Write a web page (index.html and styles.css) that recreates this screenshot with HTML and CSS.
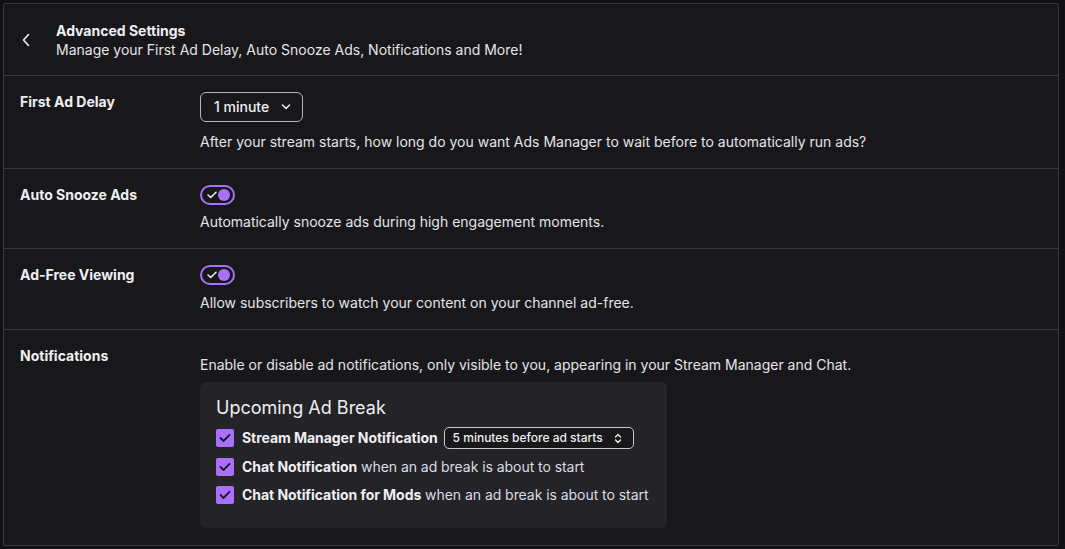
FILE: index.html
```html
<!DOCTYPE html>
<html lang="en">
<head>
<meta charset="utf-8">
<title>Advanced Settings</title>
<link rel="stylesheet" href="styles.css">
</head>
<body>
<div class="panel">
  <header class="head">
    <button class="back" aria-label="Back">
      <svg width="10" height="14" viewBox="0 0 10 14"><path d="M7.5 1.5 L2.5 7 L7.5 12.5" fill="none" stroke="#efeff1" stroke-width="1.6" stroke-linecap="round" stroke-linejoin="round"/></svg>
    </button>
    <div class="head-text">
      <div class="title">Advanced Settings</div>
      <div class="subtitle">Manage your First Ad Delay, Auto Snooze Ads, Notifications and More!</div>
    </div>
  </header>

  <section class="row row-delay">
    <div class="label">First Ad Delay</div>
    <div class="content">
      <button class="dropdown">1 minute
        <svg width="10" height="6" viewBox="0 0 10 6"><path d="M1.5 1 L5 4.5 L8.5 1" fill="none" stroke="#efeff1" stroke-width="1.5" stroke-linecap="round" stroke-linejoin="round"/></svg>
      </button>
      <p class="desc gap10">After your stream starts, how long do you want Ads Manager to wait before to automatically run ads?</p>
    </div>
  </section>

  <section class="row">
    <div class="label">Auto Snooze Ads</div>
    <div class="content">
      <div class="toggle">
        <svg class="tick" width="10" height="8" viewBox="0 0 10 8"><path d="M1 4 L3.7 6.5 L9 1.2" fill="none" stroke="#efeff1" stroke-width="1.5" stroke-linecap="round" stroke-linejoin="round"/></svg>
        <span class="knob"></span>
      </div>
      <p class="desc gap7">Automatically snooze ads during high engagement moments.</p>
    </div>
  </section>

  <section class="row">
    <div class="label">Ad-Free Viewing</div>
    <div class="content">
      <div class="toggle">
        <svg class="tick" width="10" height="8" viewBox="0 0 10 8"><path d="M1 4 L3.7 6.5 L9 1.2" fill="none" stroke="#efeff1" stroke-width="1.5" stroke-linecap="round" stroke-linejoin="round"/></svg>
        <span class="knob"></span>
      </div>
      <p class="desc gap8">Allow subscribers to watch your content on your channel ad-free.</p>
    </div>
  </section>

  <section class="row row-notif">
    <div class="label">Notifications</div>
    <div class="content">
      <p class="desc notif-desc">Enable or disable ad notifications, only visible to you, appearing in your Stream Manager and Chat.</p>
      <div class="box">
        <div class="box-title">Upcoming Ad Break</div>
        <div class="checks">
          <div class="check-row">
            <span class="checkbox"><svg width="12" height="10" viewBox="0 0 12 10"><path d="M1.5 5 L4.5 8 L10.5 1.8" fill="none" stroke="#18181b" stroke-width="1.8" stroke-linecap="round" stroke-linejoin="round"/></svg></span>
            <span class="ctext"><b>Stream Manager Notification</b></span>
            <button class="select">5 minutes before ad starts
              <svg width="8" height="11" viewBox="0 0 8 11"><path d="M1.5 4 L4 1.5 L6.5 4 M1.5 7 L4 9.5 L6.5 7" fill="none" stroke="#efeff1" stroke-width="1.4" stroke-linecap="round" stroke-linejoin="round"/></svg>
            </button>
          </div>
          <div class="check-row">
            <span class="checkbox"><svg width="12" height="10" viewBox="0 0 12 10"><path d="M1.5 5 L4.5 8 L10.5 1.8" fill="none" stroke="#18181b" stroke-width="1.8" stroke-linecap="round" stroke-linejoin="round"/></svg></span>
            <span class="ctext"><b>Chat Notification</b> when an ad break is about to start</span>
          </div>
          <div class="check-row">
            <span class="checkbox"><svg width="12" height="10" viewBox="0 0 12 10"><path d="M1.5 5 L4.5 8 L10.5 1.8" fill="none" stroke="#18181b" stroke-width="1.8" stroke-linecap="round" stroke-linejoin="round"/></svg></span>
            <span class="ctext"><b>Chat Notification for Mods</b> when an ad break is about to start</span>
          </div>
        </div>
      </div>
    </div>
  </section>
</div>
</body>
</html>
```

FILE: styles.css
```css
* { box-sizing: border-box; }
html, body { height: 100%; }
body {
  margin: 0;
  padding: 3px 6px 3px 3px;
  background: #111113;
  font-family: Inter, "Noto Sans", sans-serif;
  color: #efeff1;
  font-size: 14px;
  line-height: 20px;
}
.panel {
  height: 543px;
  background: #18181b;
  border: 1px solid #38383d;
  border-radius: 2px;
  display: flex;
  flex-direction: column;
}
.head {
  height: 72px;
  display: flex;
  align-items: center;
  border-bottom: 1px solid #38383d;
  padding-left: 14px;
}
.back {
  width: 16px;
  height: 20px;
  margin-right: 22px;
  padding: 0;
  border: 0;
  background: none;
  display: flex;
  align-items: center;
  justify-content: center;
}
.head-text { display: flex; flex-direction: column; }
.title { font-weight: 700; font-size: 14px; line-height: 20px; }
.subtitle { font-size: 14px; line-height: 18px; color: #e4e4e8; }
.row {
  display: flex;
  padding: 16px 0 16px 16px;
  border-bottom: 1px solid #38383d;
}
.row-notif { border-bottom: 0; flex: 1; }
.label {
  width: 180px;
  font-weight: 700;
  font-size: 14px;
  line-height: 20px;
}
.content { display: flex; flex-direction: column; align-items: flex-start; }
.desc { margin: 0; color: #e4e4e8; }
.gap10 { margin-top: 10px; }
.gap7 { margin-top: 7px; }
.gap8 { margin-top: 8px; }
.notif-desc { margin-top: 9px; }
.dropdown {
  height: 30px;
  width: 103px;
  padding: 0 11px 0 13px;
  border: 1px solid #b5b5bd;
  border-radius: 6px;
  background: transparent;
  color: #efeff1;
  font: 500 14px/20px Inter, "Noto Sans", sans-serif;
  display: flex;
  align-items: center;
  justify-content: space-between;
}
.toggle {
  width: 35px;
  height: 20px;
  border: 2px solid #a970ff;
  border-radius: 10px;
  background: #18181b;
  display: flex;
  align-items: center;
  justify-content: space-between;
  padding: 0 3px 0 5px;
}
.knob {
  width: 12px;
  height: 12px;
  border-radius: 50%;
  background: #a970ff;
}
.box {
  margin-top: 7px;
  width: 467px;
  background: #232328;
  border-radius: 6px;
  padding: 14px 12px 23px 16px;
}
.box-title { font-size: 18px; line-height: 24px; color: #efeff1; }
.checks { display: flex; flex-direction: column; gap: 7px; margin-top: 7px; }
.check-row { display: flex; align-items: center; height: 22px; white-space: nowrap; }
.check-row + .check-row { height: 21px; }
.checkbox {
  flex: none;
  width: 18px;
  height: 18px;
  border-radius: 2px;
  background: #a970ff;
  display: flex;
  align-items: center;
  justify-content: center;
  margin-right: 8px;
}
.ctext { color: #dcdce1; letter-spacing: -0.05px; }
.ctext b { color: #efeff1; font-weight: 700; }
.select {
  margin-left: 6px;
  height: 22px;
  width: 190px;
  border: 1px solid #c8c8cf;
  border-radius: 5px;
  background: #18181b;
  color: #efeff1;
  font: 500 12px/16px Inter, "Noto Sans", sans-serif;
  display: flex;
  align-items: center;
  justify-content: space-between;
  padding: 0 11px 0 8px;
}
```
